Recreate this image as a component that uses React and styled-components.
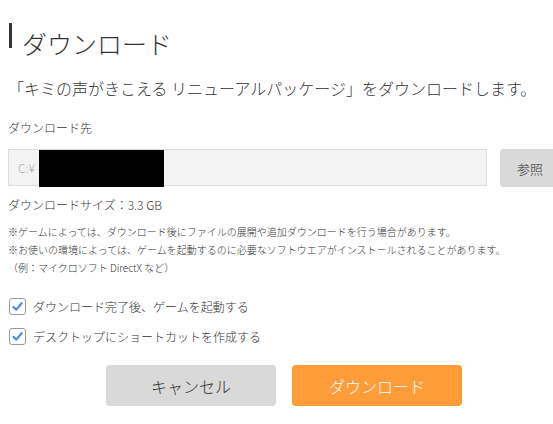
import React from 'react';
import styled, { createGlobalStyle } from 'styled-components';

const GlobalStyle = createGlobalStyle`
    html, body {
        margin: 0;
        padding: 0;
        background: #fff;
        overflow: hidden;
    }
    body {
        font-family: "Noto Sans CJK JP", "Noto Sans", sans-serif;
        font-weight: 300;
        color: #333;
    }
`

const Page = styled.div`
    width: 552px;
    padding: 23px 8px 0;
`

const Title = styled.h1`
    display: flex;
    align-items: flex-start;
    margin: 0;
    font-size: 25px;
    font-weight: 300;
    line-height: 1;
    color: #333;

    &::before {
        content: '';
        display: block;
        width: 3px;
        height: 25px;
        margin-left: 1px;
        margin-right: 10px;
        background: #333;
    }

    span {
        margin-top: 8px;
    }
`

const Lead = styled.p`
    margin: 21px 0 0;
    font-size: 16px;
    line-height: 22px;
`

const Label = styled.div`
    margin-top: 20px;
    font-size: 12px;
    line-height: 18px;
`

const PathRow = styled.div`
    display: flex;
    align-items: stretch;
    gap: 13px;
    margin-top: 12px;
`

const PathField = styled.div`
    position: relative;
    flex: 1;
    height: 37px;
    box-sizing: border-box;
    border: 1px solid #dcdcdc;
    background: #f3f3f3;
    padding-left: 9px;
    display: flex;
    align-items: center;
    font-size: 12px;
    color: #aaa;
`

const Redacted = styled.span`
    position: absolute;
    left: 30px;
    top: 0;
    width: 125px;
    height: 37px;
    background: #000;
`

const Button = styled.button`
    border: none;
    border-radius: 4px;
    font-family: inherit;
    font-weight: 300;
    cursor: pointer;
    background: ${p => (p.$primary ? '#ff9c3a' : '#d9d9d9')};
    color: ${p => (p.$primary ? '#fff' : '#333')};
    font-size: ${p => (p.$small ? '13px' : '16px')};
    width: ${p => (p.$small ? '60px' : '170px')};
    height: ${p => (p.$small ? '38px' : '41px')};
    padding: 0;
`

const SizeText = styled.div`
    margin-top: 9px;
    font-size: 12px;
    line-height: 18px;
`

const Notes = styled.div`
    margin-top: 9px;
    font-size: 10px;
    line-height: 18px;
`

const Options = styled.div`
    display: flex;
    flex-direction: column;
    gap: 13px;
    margin-top: 21px;
`

const Option = styled.label`
    display: flex;
    align-items: center;
    gap: 7px;
    font-size: 12px;
    line-height: 17px;
`

const Box = styled.span`
    width: 17px;
    height: 17px;
    box-sizing: border-box;
    border: 1px solid #9a9a9a;
    border-radius: 3px;
    background: #fff;
    display: flex;
    align-items: center;
    justify-content: center;
    margin-left: 1px;
`

const Actions = styled.div`
    display: flex;
    justify-content: center;
    gap: 16px;
    margin-top: 20px;
`

const Check = () => (
    <Box>
        <svg width="11" height="11" viewBox="0 0 11 11">
            <path d="M1.5 6 L4.3 8.6 L9.6 2.2" fill="none" stroke="#4a8edb" strokeWidth="2.2" strokeLinecap="round" strokeLinejoin="round" />
        </svg>
    </Box>
)

const App = () => (
    <Page>
        <GlobalStyle />
        <Title><span>ダウンロード</span></Title>
        <Lead>「キミの声がきこえる リニューアルパッケージ」をダウンロードします。</Lead>

        <Label>ダウンロード先</Label>
        <PathRow>
            <PathField>
                C:¥
                <Redacted />
            </PathField>
            <Button $small>参照</Button>
        </PathRow>

        <SizeText>ダウンロードサイズ：3.3 GB</SizeText>

        <Notes>
            <div>※ゲームによっては、ダウンロード後にファイルの展開や追加ダウンロードを行う場合があります。</div>
            <div>※お使いの環境によっては、ゲームを起動するのに必要なソフトウエアがインストールされることがあります。</div>
            <div>（例：マイクロソフト DirectX など）</div>
        </Notes>

        <Options>
            <Option><Check />ダウンロード完了後、ゲームを起動する</Option>
            <Option><Check />デスクトップにショートカットを作成する</Option>
        </Options>

        <Actions>
            <Button>キャンセル</Button>
            <Button $primary>ダウンロード</Button>
        </Actions>
    </Page>
)

export default App;
